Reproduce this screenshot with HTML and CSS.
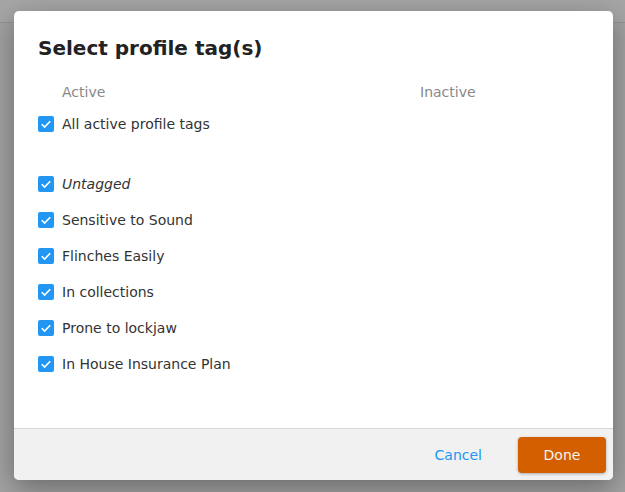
FILE: index.html
```html
<!DOCTYPE html>
<html lang="en">
<head>
  <meta charset="UTF-8">
  <title>Select profile tag(s)</title>
  <link rel="stylesheet" href="styles.css">
</head>
<body>
<div class="page-bar"></div>
<div class="overlay">
  <div class="dialog">
    <div class="dialog-body">
      <h2 class="dialog-title">Select profile tag(s)</h2>
      <div class="columns">
        <span class="col-head">Active</span>
        <span class="col-head col-inactive">Inactive</span>
      </div>
      <label class="tag-row">
        <span class="check"><svg viewBox="0 0 16 16"><path d="M3.8 8.2l2.8 2.8 5.6-5.8"/></svg></span>
        All active profile tags
      </label>
      <div class="tag-list">
        <label class="tag-row">
          <span class="check"><svg viewBox="0 0 16 16"><path d="M3.8 8.2l2.8 2.8 5.6-5.8"/></svg></span>
          <em>Untagged</em>
        </label>
        <label class="tag-row">
          <span class="check"><svg viewBox="0 0 16 16"><path d="M3.8 8.2l2.8 2.8 5.6-5.8"/></svg></span>
          Sensitive to Sound
        </label>
        <label class="tag-row">
          <span class="check"><svg viewBox="0 0 16 16"><path d="M3.8 8.2l2.8 2.8 5.6-5.8"/></svg></span>
          Flinches Easily
        </label>
        <label class="tag-row">
          <span class="check"><svg viewBox="0 0 16 16"><path d="M3.8 8.2l2.8 2.8 5.6-5.8"/></svg></span>
          In collections
        </label>
        <label class="tag-row">
          <span class="check"><svg viewBox="0 0 16 16"><path d="M3.8 8.2l2.8 2.8 5.6-5.8"/></svg></span>
          Prone to lockjaw
        </label>
        <label class="tag-row">
          <span class="check"><svg viewBox="0 0 16 16"><path d="M3.8 8.2l2.8 2.8 5.6-5.8"/></svg></span>
          In House Insurance Plan
        </label>
      </div>
    </div>
    <div class="dialog-footer">
      <button class="btn-link">Cancel</button>
      <button class="btn-done">Done</button>
    </div>
  </div>
</div>
</body>
</html>
```

FILE: styles.css
```css
html, body {
  margin: 0;
  padding: 0;
  height: 100%;
}
body {
  background: #a2a2a2;
  font-family: "DejaVu Sans", Verdana, sans-serif;
  color: #333;
  overflow: hidden;
}
.page-bar {
  height: 22px;
  border-bottom: 1px solid #949494;
  background: #a6a6a6;
}
.overlay {
  position: absolute;
  inset: 0;
  padding: 11px 12px 0 14px;
}
.dialog {
  width: 599px;
  height: 469px;
  background: #fff;
  border-radius: 5px;
  box-shadow: 0 8px 28px rgba(0, 0, 0, 0.35);
  display: flex;
  flex-direction: column;
  overflow: hidden;
}
.dialog-body {
  flex: 1;
  padding: 23px 24px 0 24px;
}
.dialog-title {
  margin: 0;
  font-size: 20px;
  font-weight: 700;
  color: #222;
  line-height: 28px;
}
.columns {
  display: flex;
  margin-top: 20px;
  padding-left: 24px;
  height: 20px;
  line-height: 20px;
}
.col-head {
  font-size: 14px;
  color: #888;
  width: 358px;
}
.col-inactive {
  width: auto;
}
.tag-row {
  display: flex;
  align-items: center;
  gap: 8px;
  height: 36px;
  margin-top: 0;
  font-size: 14px;
  color: #333;
}
.columns + .tag-row {
  margin-top: 4px;
}
.tag-list {
  margin-top: 24px;
}
.check {
  width: 16px;
  height: 16px;
  border-radius: 2px;
  background: #2196f3;
  display: flex;
}
.check svg {
  width: 16px;
  height: 16px;
  fill: none;
  stroke: #fff;
  stroke-width: 1.6;
}
.dialog-footer {
  height: 51px;
  background: #f1f1f1;
  border-top: 1px solid #d6d6d6;
  display: flex;
  align-items: center;
  justify-content: flex-end;
  gap: 36px;
  padding: 0 7px 0 0;
}
.btn-link {
  background: none;
  border: none;
  font-family: inherit;
  font-size: 14px;
  color: #2196f3;
  padding: 0;
  cursor: pointer;
}
.btn-done {
  width: 88px;
  height: 36px;
  background: #d35f00;
  color: #f3f3f3;
  border: none;
  border-radius: 4px;
  font-family: inherit;
  font-size: 14px;
  box-shadow: 0 1px 3px rgba(0, 0, 0, 0.3);
  cursor: pointer;
}
```
